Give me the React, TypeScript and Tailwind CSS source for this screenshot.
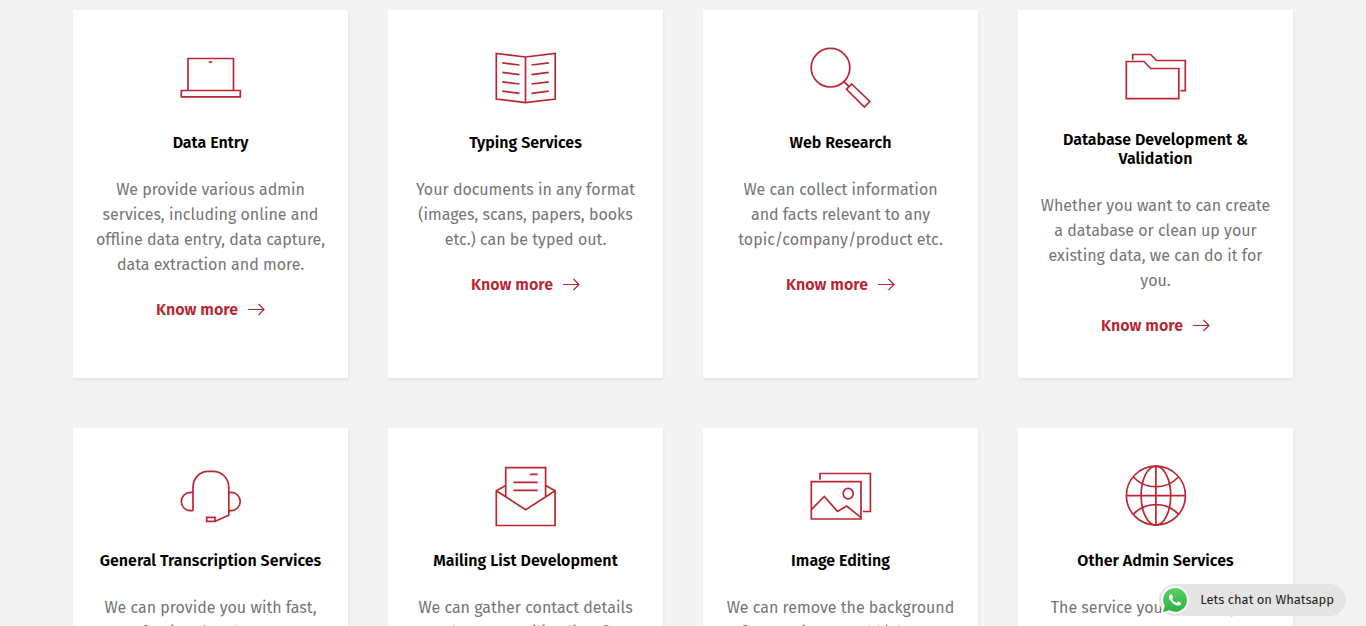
import type { ReactNode } from "react";
import { clsx } from "clsx";

interface Service {
  title: string;
  text: string;
  icon: ReactNode;
}

const services: Service[] = [
  {
    title: "Data Entry",
    text: "We provide various admin\nservices, including online and\noffline data entry, data capture,\ndata extraction and more.",
    icon: (
      <>
        <path d="M8 43.5V11.5H53.5V43.5" />
        <path d="M1.3 43.5H60.3V49.8H1.3Z" />
        <path d="M28.8 15H32.2" />
      </>
    ),
  },
  {
    title: "Typing Services",
    text: "Your documents in any format\n(images, scans, papers, books\netc.) can be typed out.",
    icon: (
      <>
        <path d="M30.5 10L1.3 6.5V52L30.5 55.6L60.2 52V6.5Z" />
        <path d="M30.5 10V55.6" />
        <path d="M7.3 15.8L24.5 18M7.3 25.4L24.5 27.6M7.3 34.8L24.5 37M7.3 44.2L24.5 46.4" />
        <path d="M53.8 15.8L36.5 18M53.8 25.4L36.5 27.6M53.8 34.8L36.5 37M53.8 44.2L36.5 46.4" />
      </>
    ),
  },
  {
    title: "Web Research",
    text: "We can collect information\nand facts relevant to any\ntopic/company/product etc.",
    icon: (
      <>
        <circle cx="20.5" cy="20.7" r="19.3" />
        <path d="M34 34.7L39 39.7" />
        <path d="M41.7 37L59.8 54.5L54.3 60L36.5 42.3Z" />
      </>
    ),
  },
  {
    title: "Database Development &\nValidation",
    text: "Whether you want to can create\na database or clean up your\nexisting data, we can do it for\nyou.",
    icon: (
      <>
        <path d="M1.3 14.5H19L25.7 21.5H53.8V51.7H1.3Z" />
        <path d="M7.7 12.7V7.5H25.7L31.5 13.5H60.3V43.6H55.5" />
      </>
    ),
  },
  {
    title: "General Transcription Services",
    text: "We can provide you with fast,\nprofessional and accurate\ntranscription services.",
    icon: (
      <>
        <path d="M13 45.7V22.5C13 13 20 6.3 28 6.3H33C42 6.3 48.8 13.5 48.8 22.5V50.3L35.2 56.3" />
        <path d="M13 27.3H10.5A9.2 9.2 0 0 0 10.5 45.7H13" />
        <path d="M48.8 27.3H51A9.2 9.2 0 0 1 51 45.7H48.8" />
        <path d="M26.7 52.3H35V56.3H26.7Z" />
      </>
    ),
  },
  {
    title: "Mailing List Development",
    text: "We can gather contact details\nand create mailing lists for\nyour business.",
    icon: (
      <>
        <path d="M10.7 31.5V2.6H50.6V31.5" />
        <path d="M10.7 20.5L1.3 25.7V60.5H60.1V25.7L50.6 20.5" />
        <path d="M1.3 25.7L30.7 44.7L60.1 25.7" />
        <path d="M34.7 9.3H42.7M18.5 17.3H42.7M18.5 25.3H42.7" />
      </>
    ),
  },
  {
    title: "Image Editing",
    text: "We can remove the background\nfrom an image, add/change\nelements and more.",
    icon: (
      <>
        <path d="M1.3 16.7H51V54H1.3Z" />
        <path d="M10 14.7V8.5H60.4V46.5H53" />
        <ellipse cx="38.2" cy="28.6" rx="5" ry="5.3" />
        <path d="M1.3 44.7L14.3 31.5L27.5 46.4L36.7 41L51 52.7" />
      </>
    ),
  },
  {
    title: "Other Admin Services",
    text: "The service you need may be\namong our many more.",
    icon: (
      <>
        <circle cx="30.9" cy="30.6" r="29.5" />
        <ellipse cx="30.9" cy="30.6" rx="14.8" ry="29.5" />
        <path d="M30.9 1V60M1.4 30.6H60.4" />
        <path d="M8.4 12C20.4 25 41.4 25 53.4 12" />
        <path d="M8.4 49.2C20.4 36.5 41.4 36.5 53.4 49.2" />
      </>
    ),
  },
];

function ServiceCard({ title, text, icon }: Service) {
  const isLong = title.includes("\n");

  return (
    <article className="bg-white px-2 pt-[37px] pb-10 text-center shadow-[1px_2px_3px_rgba(0,0,0,0.06)]">
      <svg
        viewBox="1 0 60 60"
        className="mx-auto mb-[23px] size-[60px] overflow-visible"
        fill="none"
        stroke="#bb2630"
        strokeWidth="1.7"
        aria-hidden="true"
      >
        {icon}
      </svg>
      <h3
        className={clsx(
          "mb-[22px] text-base font-semibold whitespace-pre-line text-black",
          isLong ? "pb-[3px] leading-[19px]" : "leading-[25px]"
        )}
      >
        {title}
      </h3>
      <p className="mb-5 text-base leading-[25px] whitespace-pre-line text-[#757575]">
        {text}
      </p>
      <a
        href="#"
        className="inline-flex items-center gap-[9px] align-top text-base leading-[25px] font-semibold text-[#b9252e]"
      >
        Know more
        <svg
          viewBox="0 0 18 14"
          className="h-[14px] w-[18px]"
          fill="none"
          stroke="currentColor"
          strokeWidth="1.2"
          aria-hidden="true"
        >
          <path d="M1 6.5H17M11.5 1L17 6.5L11.5 12" />
        </svg>
      </a>
    </article>
  );
}

function WhatsappButton() {
  return (
    <a
      href="#"
      className="fixed right-5 bottom-[10px] flex h-8 items-center gap-[13px] rounded-full bg-[#e4e4e4] pr-3 pl-1 text-[13px] text-[#222]"
    >
      <svg viewBox="0 0 24 24" className="size-6 overflow-visible" aria-hidden="true">
        <defs>
          <linearGradient id="bubble" x1="0" y1="0" x2="0" y2="1">
            <stop offset="0" stopColor="#5bd066" />
            <stop offset="1" stopColor="#27b43e" />
          </linearGradient>
        </defs>
        <path
          d="M.057 24l1.687-6.163a11.867 11.867 0 01-1.587-5.946C.16 5.335 5.495 0 12.05 0a11.817 11.817 0 018.413 3.488 11.824 11.824 0 013.48 8.414c-.003 6.557-5.338 11.892-11.893 11.892a11.9 11.9 0 01-5.688-1.448L.057 24z"
          fill="url(#bubble)"
          stroke="#fafafa"
          strokeWidth="4"
          strokeLinejoin="round"
          paintOrder="stroke"
        />
        <path
          d="M17.472 14.382c-.297-.149-1.758-.867-2.03-.967-.273-.099-.471-.148-.67.15-.197.297-.767.966-.94 1.164-.173.199-.347.223-.644.075-.297-.15-1.255-.463-2.39-1.475-.883-.788-1.48-1.761-1.653-2.059-.173-.297-.018-.458.13-.606.134-.133.298-.347.446-.52.149-.174.198-.298.298-.497.099-.198.05-.371-.025-.52-.075-.149-.669-1.612-.916-2.207-.242-.579-.487-.5-.669-.51-.173-.008-.371-.01-.57-.01-.198 0-.52.074-.792.372-.272.297-1.04 1.016-1.04 2.479 0 1.462 1.065 2.875 1.213 3.074.149.198 2.096 3.2 5.077 4.487.709.306 1.262.489 1.694.625.712.227 1.36.195 1.871.118.571-.085 1.758-.719 2.006-1.413.248-.694.248-1.289.173-1.413-.074-.124-.272-.198-.57-.347"
          fill="#fff"
        />
      </svg>
      Lets chat on Whatsapp
    </a>
  );
}

export default function App() {
  return (
    <main className="min-h-screen bg-[#f3f3f3] px-5 pt-[10px] pb-12 font-['Fira_Sans','Noto_Sans',sans-serif]">
      <section className="mx-auto grid max-w-[1220px] grid-cols-4 gap-x-10 gap-y-[50px]">
        {services.map((service) => (
          <ServiceCard key={service.title} {...service} />
        ))}
      </section>
      <WhatsappButton />
    </main>
  );
}
